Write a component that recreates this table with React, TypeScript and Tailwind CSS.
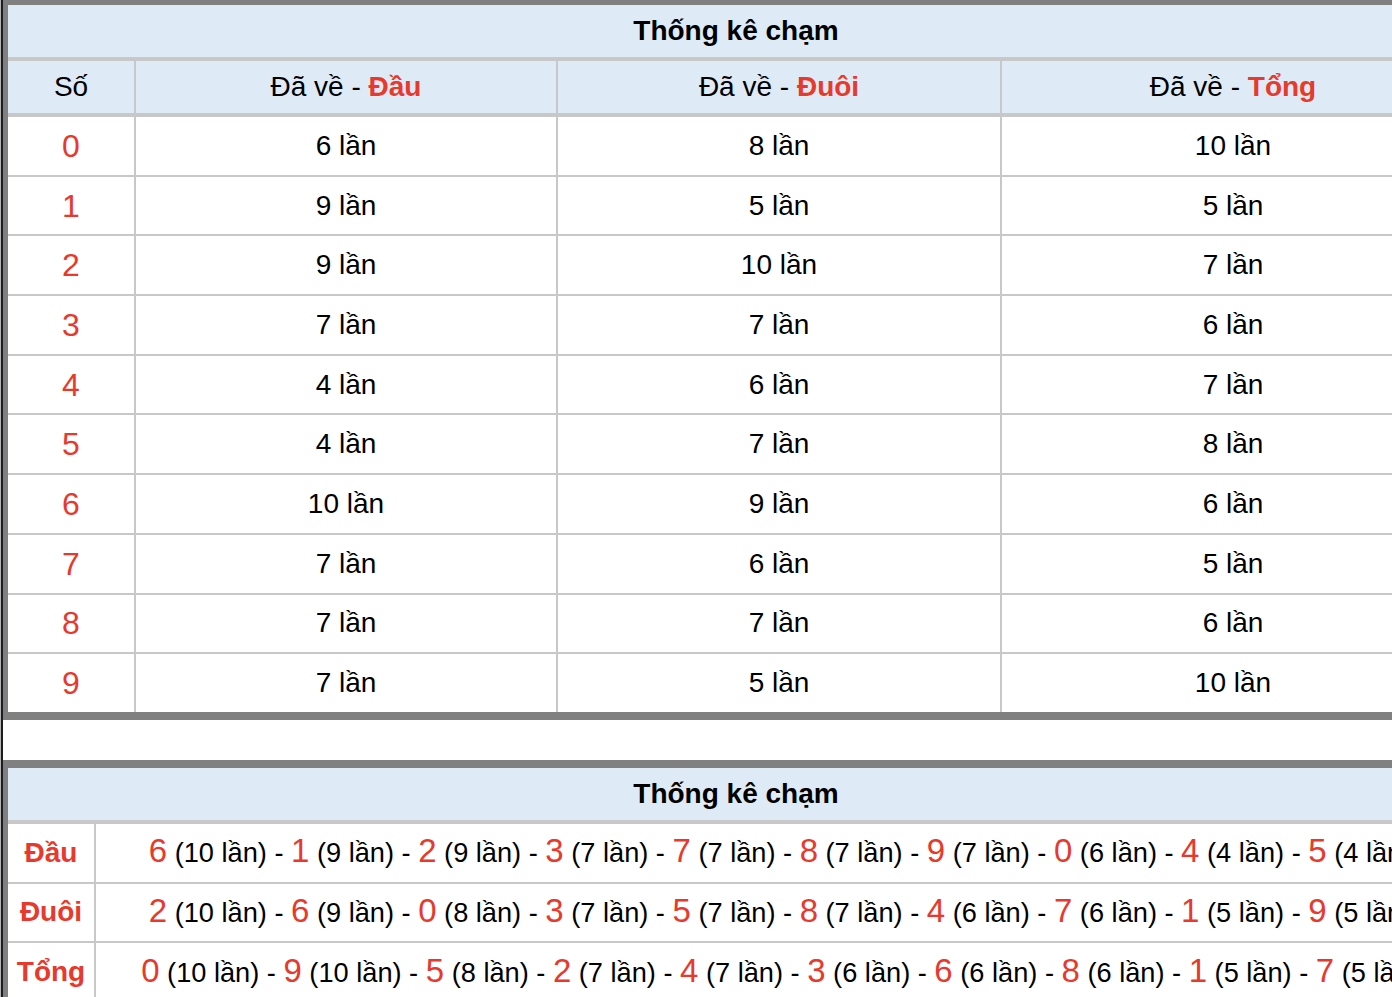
import React from "react";

const rows = [
  { so: 0, dau: 6, duoi: 8, tong: 10 },
  { so: 1, dau: 9, duoi: 5, tong: 5 },
  { so: 2, dau: 9, duoi: 10, tong: 7 },
  { so: 3, dau: 7, duoi: 7, tong: 6 },
  { so: 4, dau: 4, duoi: 6, tong: 7 },
  { so: 5, dau: 4, duoi: 7, tong: 8 },
  { so: 6, dau: 10, duoi: 9, tong: 6 },
  { so: 7, dau: 7, duoi: 6, tong: 5 },
  { so: 8, dau: 7, duoi: 7, tong: 6 },
  { so: 9, dau: 7, duoi: 5, tong: 10 },
];

const ranking: { label: string; items: [number, number][] }[] = [
  {
    label: "Đầu",
    items: [[6, 10], [1, 9], [2, 9], [3, 7], [7, 7], [8, 7], [9, 7], [0, 6], [4, 4], [5, 4]],
  },
  {
    label: "Đuôi",
    items: [[2, 10], [6, 9], [0, 8], [3, 7], [5, 7], [8, 7], [4, 6], [7, 6], [1, 5], [9, 5]],
  },
  {
    label: "Tổng",
    items: [[0, 10], [9, 10], [5, 8], [2, 7], [4, 7], [3, 6], [6, 6], [8, 6], [1, 5], [7, 5]],
  },
];

const HeadCell = ({ part }: { part: string }) => (
  <div className="bg-[#deeaf5] flex items-center justify-center text-[28px] text-black">
    <span>
      Đã về - <span className="font-bold text-[#e8392c]">{part}</span>
    </span>
  </div>
);

export default function App() {
  return (
    <div
      className="w-[1392px] h-[997px] overflow-hidden bg-white flex"
      style={{ fontFamily: '"Liberation Sans", Arial, sans-serif' }}
    >
      <div className="w-px shrink-0 bg-[#b4b4b4]" />
      <div className="w-[2px] shrink-0 bg-[#1c1c26]" />
      <div className="w-[1466px] shrink-0">
        {/* bảng 1 */}
        <div className="border-[#808080] border-t-[5px] border-x-[5px] border-b-[8px]">
          <div className="h-[52px] bg-[#deeaf5] flex items-center justify-center text-[28px] font-bold text-black">
            Thống kê chạm
          </div>
          <div className="grid grid-cols-[126px_420px_442px_462px] gap-[2px] bg-[#c8c8c8] pt-[4px]">
            <div className="h-[52px] bg-[#deeaf5] flex items-center justify-center text-[28px] text-black">Số</div>
            <HeadCell part="Đầu" />
            <HeadCell part="Đuôi" />
            <HeadCell part="Tổng" />
            <div className="col-span-4 h-[2px] -my-[2px]" />
            {rows.map((r) => (
              <React.Fragment key={r.so}>
                <div className="h-[57.7px] bg-white flex items-center justify-center text-[32px] text-[#e8392c]">
                  {r.so}
                </div>
                <div className="h-[57.7px] bg-white flex items-center justify-center text-[28px] text-black">
                  {r.dau} lần
                </div>
                <div className="h-[57.7px] bg-white flex items-center justify-center text-[28px] text-black">
                  {r.duoi} lần
                </div>
                <div className="h-[57.7px] bg-white flex items-center justify-center text-[28px] text-black">
                  {r.tong} lần
                </div>
              </React.Fragment>
            ))}
          </div>
        </div>

        {/* bảng 2 */}
        <div className="mt-[40px] border-[#808080] border-t-[8px] border-x-[5px]">
          <div className="h-[52px] bg-[#deeaf5] flex items-center justify-center text-[28px] font-bold text-black">
            Thống kê chạm
          </div>
          <div className="grid grid-cols-[86px_1368px] gap-[2px] bg-[#c8c8c8] pt-[4px]">
            {ranking.map((g) => (
              <React.Fragment key={g.label}>
                <div className="h-[57.7px] bg-white flex items-center justify-center text-[28px] font-bold text-[#e8392c]">
                  {g.label}
                </div>
                <div className="h-[57.7px] bg-white flex items-center justify-center overflow-hidden pb-[3px]">
                  <span className="whitespace-nowrap text-[27.2px] text-black">
                    {g.items.map(([n, c], i) => (
                      <React.Fragment key={n}>
                        {i > 0 && " - "}
                        <span className="text-[33px] text-[#e8392c]">{n}</span> ({c} lần)
                      </React.Fragment>
                    ))}
                  </span>
                </div>
              </React.Fragment>
            ))}
          </div>
        </div>
      </div>
    </div>
  );
}
